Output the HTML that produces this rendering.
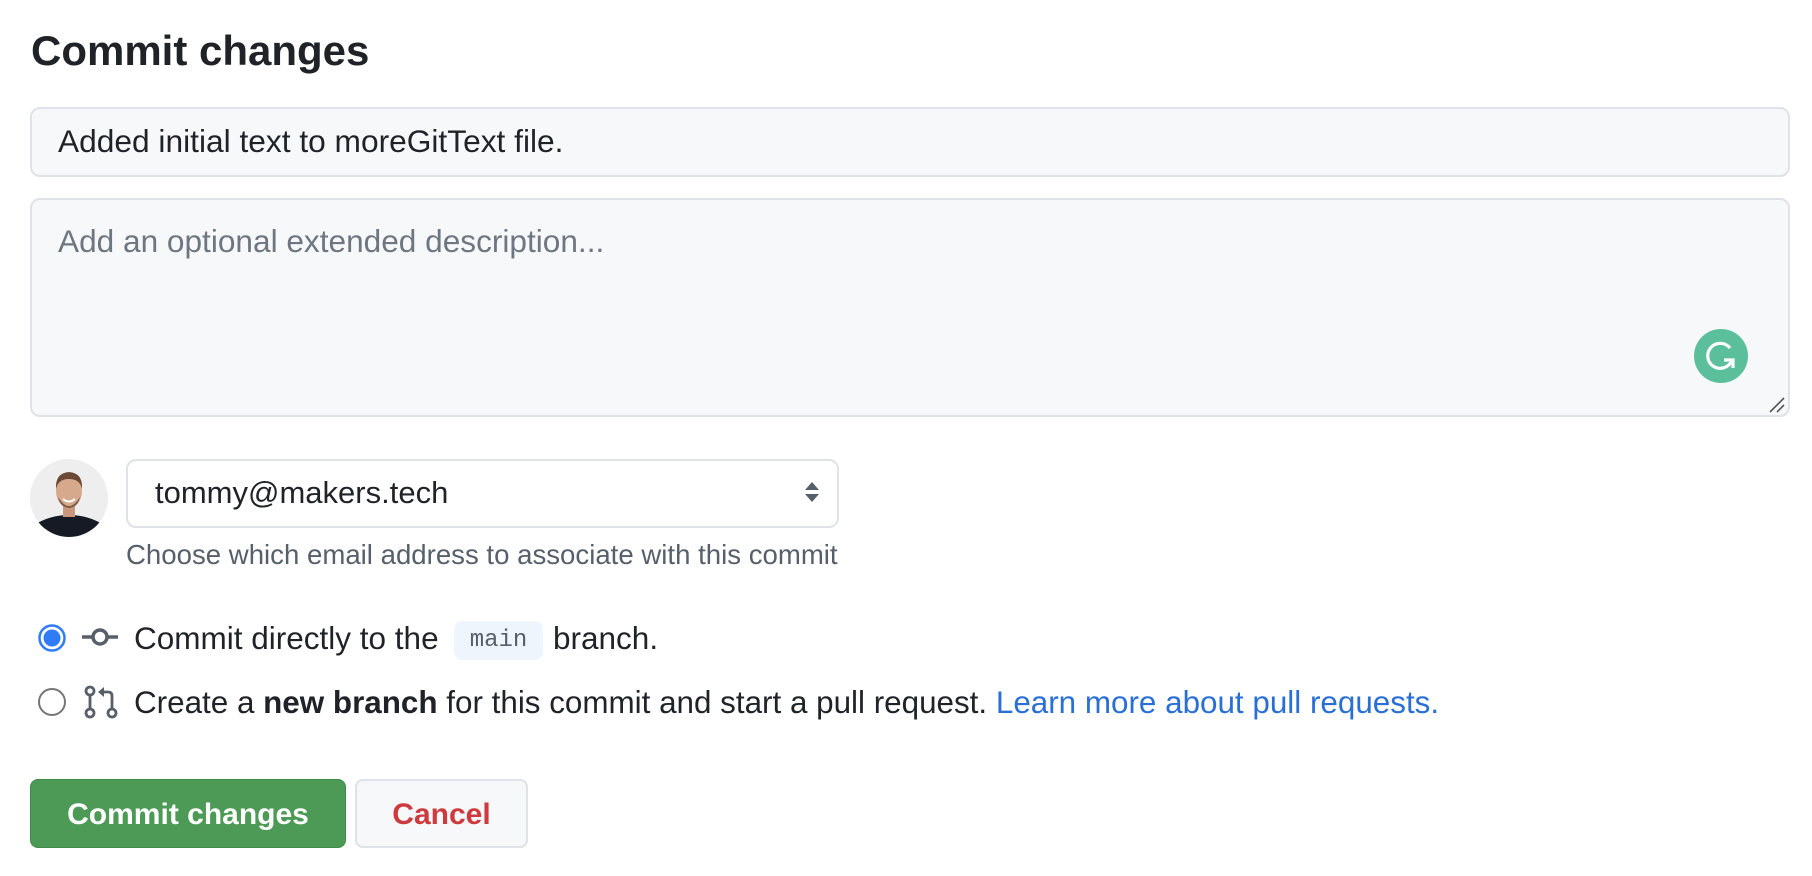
<!DOCTYPE html>
<html><head><meta charset="utf-8"><style>
*{box-sizing:border-box;margin:0;padding:0}
body{width:1812px;height:876px;background:#fff;font-family:"Liberation Sans",Arial,sans-serif;color:#1f2328;position:relative;overflow:hidden}
.abs{position:absolute;white-space:nowrap}
h1{position:absolute;left:31px;top:27px;font-size:42px;font-weight:bold;line-height:48px;color:#1f2328}
.box{position:absolute;background:#f6f8fa;border:2px solid #dfe2e6;border-radius:10px}
</style></head><body>
<h1>Commit changes</h1>
<div class="box" style="left:30px;top:107px;width:1760px;height:70px;background:#f7f8fa"></div>
<div class="abs" style="left:58px;top:123px;font-size:31.7px;line-height:36px;color:#1f2328">Added initial text to moreGitText file.</div>
<div class="box" style="left:30px;top:198px;width:1760px;height:219px;background:#f7f8fa"></div>
<div class="abs" style="left:58px;top:223px;font-size:31.6px;line-height:36px;color:#6e7781">Add an optional extended description...</div>
<svg class="abs" style="left:1694px;top:329px" width="54" height="54" viewBox="0 0 54 54"><circle cx="27" cy="27" r="27" fill="#5bbf9c"/><path d="M36 19 A12.5 12.5 0 1 0 38 31" fill="none" stroke="#fff" stroke-width="3.2"/><path d="M30 31 H39 V39" fill="none" stroke="#fff" stroke-width="3.2"/></svg>
<svg class="abs" style="left:1768px;top:396px" width="18" height="18"><path d="M2 16 L16 2 M9 16 L16 9" stroke="#555" stroke-width="1.6"/></svg>
<svg class="abs" style="left:30px;top:459px" width="78" height="78" viewBox="0 0 78 78"><defs><clipPath id="c"><circle cx="39" cy="39" r="39"/></clipPath></defs><g clip-path="url(#c)"><rect width="78" height="78" fill="#eeeeee"/><path d="M0 78 L4 66 Q20 56 39 56 Q58 56 74 66 L78 78Z" fill="#151a24"/><rect x="33" y="46" width="12" height="12" fill="#c9987c"/><ellipse cx="39" cy="32" rx="13" ry="17" fill="#d6a98d"/><path d="M26 30 Q25 14 39 13 Q53 14 52 30 Q50 20 39 20 Q28 20 26 30Z" fill="#6b4a35"/><path d="M28 38 Q39 56 50 38 Q48 48 39 49 Q30 48 28 38Z" fill="#7a5a45"/><path d="M33 40 Q39 45 45 40" stroke="#fff" stroke-width="2" fill="none"/></g></svg>
<div class="abs" style="left:126px;top:459px;width:713px;height:69px;border:2px solid #dfe2e6;border-radius:10px;background:#fff"></div>
<div class="abs" style="left:155px;top:475px;font-size:31px;line-height:36px;color:#1f2328">tommy@makers.tech</div>
<svg class="abs" style="left:804px;top:481px" width="16" height="22"><path d="M8 1 L15 9 H1Z M1 13 H15 L8 21Z" fill="#57606a"/></svg>
<div class="abs" style="left:126px;top:539px;font-size:27.6px;line-height:32px;color:#57606a">Choose which email address to associate with this commit</div>
<svg class="abs" style="left:36px;top:622px" width="32" height="32"><circle cx="16" cy="16" r="12.5" fill="#fff" stroke="#2f7cf6" stroke-width="2.5"/><circle cx="16" cy="16" r="8.5" fill="#2f7cf6"/></svg>
<svg class="abs" style="left:81px;top:626px" width="38" height="22"><path d="M1 11 H11 M27 11 H37" stroke="#57606a" stroke-width="3.5"/><circle cx="19" cy="11" r="7" fill="none" stroke="#57606a" stroke-width="3.5"/></svg>
<div class="abs" style="left:134px;top:620px;font-size:31.5px;line-height:36px">Commit directly to the</div>
<div class="abs" style="left:454px;top:621px;width:89px;height:39px;background:#eef5fd;border-radius:8px;font-family:'Liberation Mono',monospace;font-size:24px;line-height:39px;text-align:center;color:#57606a">main</div>
<div class="abs" style="left:553px;top:620px;font-size:31.5px;line-height:36px">branch.</div>
<svg class="abs" style="left:36px;top:686px" width="32" height="32"><circle cx="16" cy="16" r="13" fill="#fff" stroke="#767676" stroke-width="2"/></svg>
<svg class="abs" style="left:83px;top:684px" width="36" height="36" viewBox="0 0 36 36"><circle cx="7" cy="7" r="4" fill="none" stroke="#57606a" stroke-width="2.8"/><circle cx="7" cy="29" r="4" fill="none" stroke="#57606a" stroke-width="2.8"/><circle cx="29" cy="29" r="4" fill="none" stroke="#57606a" stroke-width="2.8"/><path d="M7 11 V25" stroke="#57606a" stroke-width="2.8"/><path d="M29 25 V12 Q29 8 25 8 H18" fill="none" stroke="#57606a" stroke-width="2.8"/><path d="M21 3 L15 8 L21 13Z" fill="#57606a"/></svg>
<div class="abs" style="left:134px;top:685px;font-size:31.4px;line-height:36px">Create a <b>new branch</b> for this commit and start a pull request. <span style="color:#2a6fd6">Learn more about pull requests.</span></div>
<div class="abs" style="left:30px;top:779px;width:316px;height:69px;background:#4c9a55;border:1px solid #3f8a48;border-radius:8px;color:#fff;font-size:30px;font-weight:bold;line-height:70px;text-align:center">Commit changes</div>
<div class="abs" style="left:355px;top:779px;width:173px;height:69px;background:#f6f8fa;border:2px solid #dfe2e6;border-radius:8px;color:#cf3a3e;font-size:30px;font-weight:bold;line-height:68px;text-align:center">Cancel</div>
</body></html>
